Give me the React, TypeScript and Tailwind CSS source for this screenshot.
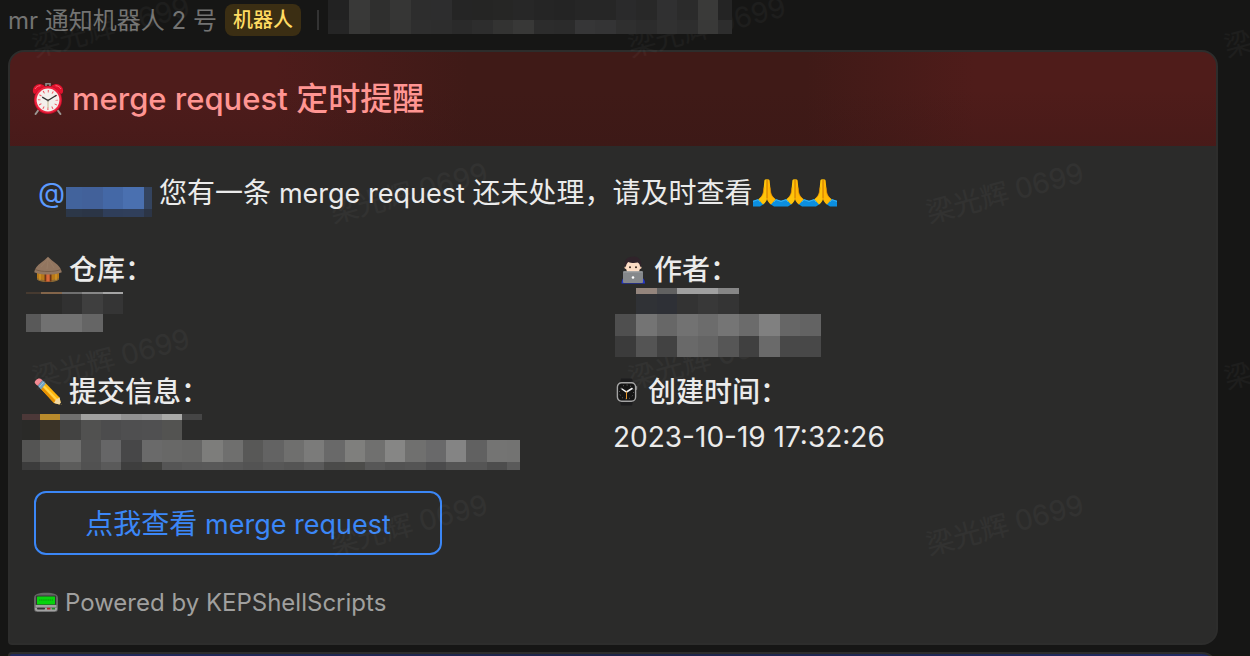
import type { ReactNode } from "react";

type Row = { y: number; h: number; skip?: number; colors: string };

/* Redacted content: rows of coloured cells on a fixed column step. */
function Mosaic({
  width,
  height,
  first,
  step,
  rows,
  className = "",
}: {
  width: number;
  height: number;
  first: number;
  step: number;
  rows: Row[];
  className?: string;
}) {
  const edge = (i: number) => (i === 0 ? 0 : Math.min(width, Math.round(first + (i - 1) * step)));
  return (
    <svg
      aria-hidden="true"
      width={width}
      height={height}
      viewBox={`0 0 ${width} ${height}`}
      shapeRendering="crispEdges"
      className={`relative z-10 block shrink-0 ${className}`}
    >
      {rows.map((row, r) =>
        row.colors.split(" ").map((color, i) => {
          const n = i + (row.skip ?? 0);
          return (
            <rect key={`${r}-${i}`} x={edge(n)} y={row.y} width={edge(n + 1) - edge(n)} height={row.h} fill={`#${color}`} />
          );
        }),
      )}
    </svg>
  );
}

const senderRows: Row[] = [
  { y: 0, h: 20, colors: "222222 393938 2f2f2e 363635 2d2d2d 2d2d2e 252525 252524 262625 272727 252525 242424 262626 262626 2a2a2b 282828 303031 2b2b2b 3a3a39 242424" },
  { y: 20, h: 14, colors: "252525 373736 30302f 353534 2e2e2e 2d2d2d 2a2a2a 2d2d2d 333332 383837 2c2c2c 2b2b2b 363637 343435 2f2f2f 2c2c2c 313131 2e2e2e 393938 2d2d2d" },
];
const mentionRows: Row[] = [
  { y: 0, h: 22, colors: "42639c 42619a 4468a6 4a70b0 34445f" },
  { y: 22, h: 8, colors: "2c3748 2b3546 2f3e5a 303f5b 2c3546" },
];
const repoRows: Row[] = [
  { y: 0, h: 2, colors: "463a30 83654a 707070 888888 a5a5a5" },
  { y: 2, h: 20, skip: 2, colors: "313131 3f3f3f 353535" },
  { y: 22, h: 18, colors: "595959 717171 717171 656565" },
];
const authorRows: Row[] = [
  { y: 0, h: 6, skip: 1, colors: "94857d 616161 a0a0a0 a0a0a0 868686" },
  { y: 6, h: 20, skip: 1, colors: "303236 2e3036 333333 383838 343434" },
  { y: 26, h: 22, colors: "4f4f4f 747474 676767 727272 6c6c6c 757575 6b6b6b 808080 666666 636363" },
  { y: 48, h: 21, colors: "3b3b3b 545454 424242 696969 646464 565656 404040 6a6a6a 484848 484848" },
];
const commitRows: Row[] = [
  { y: 0, h: 6, colors: "4c3838 b88a2c 70706f a0a09f a0a0a0 919191 959595 a9a9a7 454545" },
  { y: 6, h: 20, colors: "2a2a28 3a3327 434342 515150 4c4c4d 4f4f50 505051 535351" },
  { y: 26, h: 22, colors: "545453 656563 6e6e6d 535353 666667 474748 6a6a6a 686867 666665 7d7d7b 6f6f6e 585857 636363 6f6f6e 7b7b7a 696969 7f7f7d 70706f 868685 70706f 69696a 848484 616161 747473 737372" },
  { y: 48, h: 8, colors: "3c3c3c 4a4a4a 5c5c5b 515151 5a5a5a 3e3e3e 40403e 555555 585858 595959 575757 535353 575757 545454 5a5a5a 4b4b4a 4c4c4a 575757 525252 545454 4b4b4c 555555 555555 4d4d4d 5a5a5a" },
];

function AlarmClock() {
  return (
    <svg aria-hidden="true" viewBox="0 0 32 32" className="size-8 shrink-0">
      <path d="M14 3V.8h4V3" fill="none" stroke="#8c8c8c" strokeWidth="1.6" />
      <path d="M6.5 27 3.6 31M25.5 27l2.9 4" stroke="#9b9692" strokeWidth="2" strokeLinecap="round" />
      <path d="M1.2 9.6C-.3 5 4 .3 9.2 1.2c2 .4 3.300 1.300 3.800 2.800L3 11c-.9 0-1.500-.5-1.800-1.400z" fill="#e2122d" />
      <path d="M30.800 9.600C32.300 5 28 .3 22.800 1.200c-2 .4-3.300 1.300-3.800 2.800l10 7c.9 0 1.500-.5 1.800-1.400z" fill="#e2122d" />
      <path d="M3 6c1-2 3-3.300 5.500-3.300M29 6c-1-2-3-3.300-5.500-3.300" fill="none" stroke="#ff6b78" strokeWidth="1" />
      <circle cx="16" cy="17" r="14" fill="#c40d27" />
      <circle cx="16" cy="16.700" r="13.300" fill="#ee2540" />
      <circle cx="16" cy="17" r="11.400" fill="#f3f0ec" />
      <circle cx="16" cy="17" r="8.800" fill="none" stroke="#ee5560" strokeWidth="2.600" strokeDasharray="1 3.608" strokeDashoffset=".5" />
      <path d="M16 17.500 10.700 14.300M16 17.500l8-5" stroke="#333" strokeWidth="1.400" strokeLinecap="round" />
      <path d="M16 16v9" stroke="#c2b184" strokeWidth=".9" />
      <circle cx="16" cy="17.300" r="1.100" fill="#4a4a4a" />
    </svg>
  );
}

function Hut() {
  return (
    <svg aria-hidden="true" viewBox="0 0 28 28" className="size-7 shrink-0">
      <path d="M3 16h22v7c-2 2-6 2.700-11 2.700S5 25 3 23z" fill="#b87918" />
      <path d="M3 22c3 1.800 7 2.300 11 2.300s8-.5 11-2.300v1.400c-2 1.900-6 2.600-11 2.600S5 25.300 3 23.400z" fill="#8c6a35" />
      <path d="M6 18v6M22 18v6" stroke="#d79b2c" strokeWidth="1.200" />
      <path d="M10.500 17h7v8.500h-7z" fill="#6e3517" />
      <path d="M12.300 17.500h3.400v8h-3.400z" fill="#d9683a" />
      <path d="M14 .8c2.200 2.200 4.600 4.200 7.300 6.300 3 2.300 6 5.400 6.500 9.200-3.300 1.500-8 2.300-13.800 2.300S3.500 17.800.2 16.300C.7 12.500 3.700 9.400 6.700 7.100 9.400 5 11.800 3 14 .8z" fill="#927660" />
      <path d="M1 13.500c4 1.500 8 2 13 2s9-.5 13-2" fill="none" stroke="#705743" strokeWidth=".8" />
      <path d="M14 2c-1.500 3-4 5-7 9M14 2c0 4-.5 7-1 11M14 2c1.500 3 4 6 6 10" fill="none" stroke="#9c816a" strokeWidth=".6" />
    </svg>
  );
}

function Technologist() {
  return (
    <svg aria-hidden="true" viewBox="0 0 34 28" className="h-7 w-[34px] shrink-0">
      <path d="M8.500 27.500c0-5 3.500-8.500 11.500-8.500s12 3.500 12 8.500z" fill="#2437d0" />
      <path d="M17 16h6v5h-6z" fill="#dfb99c" />
      <circle cx="13" cy="11.500" r="1.500" fill="#edc9ae" />
      <circle cx="27" cy="11.500" r="1.500" fill="#edc9ae" />
      <path d="M13 7.500c0-4 3-5.500 7-5.500s7 1.500 7 5.500v4c0 4.500-3.200 7.500-7 7.500s-7-3-7-7.500z" fill="#fbdcc4" />
      <path d="M12 10.500C10.500 4.500 14 .8 19.500.8c2-.8 4.500 0 6 1.500 2.500 1.700 3.200 4.700 2.500 8.200h-1c0-2-1-3.300-2.200-4-3 .8-7 .6-9.300-.5-1.500 1-2.300 2.500-2.500 4.500z" fill="#30232a" />
      <circle cx="17" cy="11.300" r="1" fill="#37251d" />
      <circle cx="23" cy="11.300" r="1" fill="#37251d" />
      <rect x="10" y="15.300" width="20" height="11.700" rx="1" fill="#85888b" />
      <path d="M10.500 15.900h19" stroke="#aaadb0" strokeWidth=".8" />
      <circle cx="20" cy="21.500" r="1.300" fill="#fff" />
    </svg>
  );
}

function Pencil() {
  return (
    <svg aria-hidden="true" viewBox="0 0 28 28" className="size-7 shrink-0">
      <path d="m6.500 10.500 4.500-6L25.500 19.500l1.800 7.500-7.300-2z" fill="#fdb40b" />
      <path d="m9 7.500 14.500 15" stroke="#ffd34a" strokeWidth="2.200" />
      <path d="m6.500 10.500 1.500-2L22 23.500l-2 1.500z" fill="#e79003" />
      <path d="m20 25 2-3.500 3.500-2 1.800 7.500z" fill="#f2d9a4" />
      <path d="m25.300 26.500 1.500-1.700.7 2.500z" fill="#2c2c2c" />
      <path d="m3.800 7.800 4.700-5.500 3.300 3.200-4.700 5.900z" fill="#6f9fc0" />
      <path d="m5.200 9.200 4.900-5.600" stroke="#a9cbe0" strokeWidth=".8" />
      <path d="M1 5.300C-.3 3.500 3.500-.5 6 .6c1 .4 1.800 1 2.500 1.700L3.800 7.800C2.700 7.200 1.700 6.300 1 5.300z" fill="#f28892" />
    </svg>
  );
}

function Watch() {
  return (
    <svg aria-hidden="true" viewBox="0 0 28 28" className="size-7 shrink-0">
      <path d="M8 .5h11l1 4v19l-1 4H8l-1-4v-19z" fill="#1d1d1e" />
      <rect x="22.600" y="8" width="1.600" height="4" rx=".7" fill="#777" />
      <rect x="4.400" y="4.700" width="18.200" height="18.600" rx="4.200" fill="#141414" stroke="#a3a3a3" strokeWidth="1.400" />
      <circle cx="13.500" cy="14" r="7" fill="none" stroke="#8a8a8a" strokeWidth="1" strokeDasharray=".8 2.865" />
      <path d="m9 11 4.500 3 5.500-3.500" fill="none" stroke="#f4f4f4" strokeWidth="1.500" strokeLinecap="round" />
      <path d="M13.500 13.500v7.500" stroke="#e4942c" strokeWidth="1" />
    </svg>
  );
}

function FoldedHands() {
  return (
    <svg aria-hidden="true" viewBox="0 0 28 28" className="size-7 shrink-0">
      <path d="M0 21.500l6-1.500 4.500 5.200L7 27.500H0z" fill="#0c8fe0" />
      <path d="m28 21.500-6-1.500-4.500 5.200 3.500 2.300h7z" fill="#0c8fe0" />
      <path d="m0 22.500 5-1.800 2 2.300M28 22.500l-5-1.800-2 2.300" fill="none" stroke="#39b3f5" strokeWidth="1" />
      <path d="M14 .5c-1.400-.8-2.600 0-2.700 1.500L10.300 13c-.3 2.500-2 5-5 7.300l4.700 5.200c2.500-1.800 3.500-3.500 4-5.500z" fill="#ffc40a" />
      <path d="M14 .5c1.400-.8 2.600 0 2.700 1.500L17.700 13c.3 2.500 2 5 5 7.300L18 25.500c-2.500-1.800-3.500-3.500-4-5.500z" fill="#ffb804" />
      <path d="M14 1v18.500" stroke="#c56a02" strokeWidth=".9" />
      <path d="M11 8.500 10.200 14c-.5 2-1.500 3.600-3 5M17 8.500l.8 5.500c.5 2 1.500 3.600 3 5" fill="none" stroke="#e98c00" strokeWidth=".7" />
    </svg>
  );
}

function Pager() {
  return (
    <svg aria-hidden="true" viewBox="0 0 24 24" className="size-6 shrink-0">
      <path d="M3 3C7 1.300 17 1.300 21 3c2 .8 3 2 3 4.500v10c0 2.500-1 3.500-3.500 3.500h-17C1 21 0 20 0 17.500v-10C0 5 1 3.800 3 3z" fill="#656565" />
      <path d="M1.500 15h21" stroke="#b5b5b5" strokeWidth="1.400" />
      <path d="M1 16.500h22V18c0 1.500-1 2.200-2.500 2.200h-17C2 20.200 1 19.500 1 18z" fill="#a2a2a2" />
      <rect x="2" y="4.500" width="20" height="9.500" rx="1" fill="#343434" />
      <rect x="3" y="5.500" width="18" height="8" rx=".6" fill="#08d30d" />
      <path d="M5 9h14" stroke="#07ad0a" strokeWidth="1.600" strokeDasharray="1.500 .6" />
      <rect x="3" y="16.800" width="8" height="1.700" rx=".8" fill="#333" />
      <rect x="13" y="16.800" width="3.500" height="1.700" fill="#b81d24" />
      <rect x="17.700" y="16.800" width="3.300" height="1.700" fill="#1f8a28" />
    </svg>
  );
}

function Field({ icon, label, children }: { icon: ReactNode; label: string; children: ReactNode }) {
  return (
    <section className="min-w-0">
      <h3 className="flex h-[38px] items-center gap-[7px] pt-0.5 text-[28px] leading-9 font-medium whitespace-nowrap">
        {icon}
        {label}
      </h3>
      {children}
    </section>
  );
}

const marks = [
  "left-[30px] top-[8px]",
  "left-[626px] top-[8px]",
  "left-[1222px] top-[8px]",
  "left-[328px] top-[174px]",
  "left-[924px] top-[174px]",
  "left-[30px] top-[340px]",
  "left-[626px] top-[340px]",
  "left-[1222px] top-[340px]",
  "left-[328px] top-[506px]",
  "left-[924px] top-[506px]",
];

function Watermark() {
  return (
    <div aria-hidden="true" className="pointer-events-none absolute inset-0 overflow-hidden text-[28px] leading-[38px] text-white/[0.035]">
      {marks.map((place) => (
        <span key={place} className={`absolute w-40 -rotate-15 text-center whitespace-nowrap ${place}`}>
          梁光辉 0699
        </span>
      ))}
    </div>
  );
}

export default function App() {
  return (
    <main className="relative flex h-screen flex-col overflow-hidden bg-[#161615] pr-8 pl-2 font-[Inter,'Noto_Sans_CJK_SC',sans-serif] text-[#ebebeb]">
      <header className="flex h-[50px] shrink-0 items-start">
        <p className="text-2xl leading-[42px] whitespace-nowrap text-[#737372]">mr 通知机器人 2 号</p>
        <span className="mt-1 ml-2 h-8 rounded-lg bg-[#3b2e13] px-2 text-xl leading-8 font-medium whitespace-nowrap text-[#ffdc62]">
          机器人
        </span>
        <span className="mt-2.5 ml-4 h-5 w-0.5 bg-[#333333]" />
        <Mosaic width={404} height={34} first={21} step={20.5} rows={senderRows} className="ml-[9px]" />
      </header>

      <article className="shrink-0 overflow-hidden rounded-2xl rounded-bl border-2 border-[#2d2d2c] bg-[#2b2b2a]">
        <h2 className="flex h-[94px] items-center gap-2 bg-[linear-gradient(180deg,transparent_40%,#3817164d),linear-gradient(90deg,#4e1c1b_22%,#3f1a17_38%,#3f1a17_66%,#4f1c1a_80%)] px-[22px] text-[32px] font-medium whitespace-nowrap text-[#ff9592]">
          <AlarmClock />
          <span>
            <span className="text-[31px]">merge request</span> 定时提醒
          </span>
        </h2>

        <div className="px-6 pb-5">
          <p className="flex h-[104px] items-center gap-[7px] pb-2.5 pl-1 text-[28px] whitespace-nowrap">
            <span className="flex items-center text-[#5c9bff]">
              @
              <Mosaic width={86} height={30} first={16} step={20.5} rows={mentionRows} className="mt-[18px] ml-px" />
            </span>
            <span className="flex items-center">
              <span>
                您有一条 <span className="text-[27px]">merge request</span> 还未处理，请及时查看
              </span>
              <FoldedHands />
              <FoldedHands />
              <FoldedHands />
            </span>
          </p>

          <div className="grid grid-cols-2 gap-y-[15px]">
            <Field icon={<Hut />} label="仓库：">
              <Mosaic width={99} height={40} first={15} step={20.5} rows={repoRows} className="mt-1 -ml-2" />
            </Field>
            <Field icon={<Technologist />} label="作者：">
              <Mosaic width={206} height={69} first={21} step={20.5} rows={authorRows} className="ml-0.5" />
            </Field>
            <Field icon={<Pencil />} label="提交信息：">
              <Mosaic width={498} height={56} first={18} step={20.3} rows={commitRows} className="mt-1 -ml-3" />
            </Field>
            <Field icon={<Watch />} label="创建时间：">
              <time className="mt-1 block text-[28px] leading-[46px] whitespace-nowrap">2023-10-19 17:32:26</time>
            </Field>
          </div>

          <button
            type="button"
            className="mt-[21px] block h-16 w-[408px] cursor-pointer rounded-xl border-2 border-[#3b87f7] pt-0.5 text-[28px] whitespace-nowrap text-[#3b87f7]"
          >
            点我查看 <span className="text-[27px]">merge request</span>
          </button>

          <footer className="mt-7 flex h-10 items-center gap-[7px] text-2xl whitespace-nowrap text-[#a0a09f]">
            <Pager />
            Powered by KEPShellScripts
          </footer>
        </div>
      </article>

      <div className="mt-[7px] min-h-24 shrink-0 rounded-2xl rounded-tl border-2 border-[#2d2d2c] bg-linear-to-r from-[#20295e] via-[#1d2448] to-[#202a62]" />

      <Watermark />
    </main>
  );
}
